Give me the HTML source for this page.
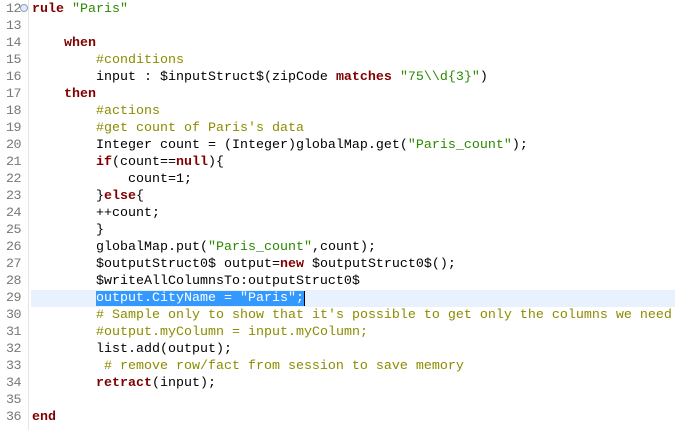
<!DOCTYPE html>
<html><head><style>
html,body{margin:0;padding:0;background:#fff;width:675px;height:430px;overflow:hidden}
.g{position:absolute;left:0;top:0;width:28px;height:430px;background:#fff;border-right:1px solid #e4e4e4}
.r{position:absolute;left:0;height:17px;line-height:17px;width:675px;font-family:"Courier New","Liberation Mono",monospace;font-size:13.33px;white-space:pre;color:#000}
.n{position:absolute;left:0;width:21px;text-align:right;color:#787878;letter-spacing:-0.5px}
.c{position:absolute;left:32px}
.k{color:#7f0000;font-weight:bold}
.s{color:#2a8a00}
.m{color:#8c8c00}
.cur{background:#e8f2fe}
.sel{background:#3399ff;color:#fff}
</style></head><body>
<div class="g"></div>
<div class="r" style="top:1px"><span class="n">12</span><span style="position:absolute;left:20px;top:3px;width:8px;height:8px;border-radius:50%;border:1px solid #8aa0c0;background:#e6ecf5;box-sizing:border-box"></span><span class="c"><span class="k">rule</span> <span class="s">"Paris"</span></span></div>
<div class="r" style="top:18px"><span class="n">13</span></div>
<div class="r" style="top:35px"><span class="n">14</span><span class="c">    <span class="k">when</span></span></div>
<div class="r" style="top:52px"><span class="n">15</span><span class="c">        <span class="m">#conditions</span></span></div>
<div class="r" style="top:69px"><span class="n">16</span><span class="c">        input : $inputStruct$(zipCode <span class="k">matches</span> <span class="s">"75\\d{3}"</span>)</span></div>
<div class="r" style="top:86px"><span class="n">17</span><span class="c">    <span class="k">then</span></span></div>
<div class="r" style="top:103px"><span class="n">18</span><span class="c">        <span class="m">#actions</span></span></div>
<div class="r" style="top:120px"><span class="n">19</span><span class="c">        <span class="m">#get count of Paris's data</span></span></div>
<div class="r" style="top:137px"><span class="n">20</span><span class="c">        Integer count = (Integer)globalMap.get(<span class="s">"Paris_count"</span>);</span></div>
<div class="r" style="top:154px"><span class="n">21</span><span class="c">        <span class="k">if</span>(count==<span class="k">null</span>){</span></div>
<div class="r" style="top:171px"><span class="n">22</span><span class="c">            count=1;</span></div>
<div class="r" style="top:188px"><span class="n">23</span><span class="c">        }<span class="k">else</span>{</span></div>
<div class="r" style="top:205px"><span class="n">24</span><span class="c">        ++count;</span></div>
<div class="r" style="top:222px"><span class="n">25</span><span class="c">        }</span></div>
<div class="r" style="top:239px"><span class="n">26</span><span class="c">        globalMap.put(<span class="s">"Paris_count"</span>,count);</span></div>
<div class="r" style="top:256px"><span class="n">27</span><span class="c">        $outputStruct0$ output=<span class="k">new</span> $outputStruct0$();</span></div>
<div class="r" style="top:273px"><span class="n">28</span><span class="c">        $writeAllColumnsTo:outputStruct0$</span></div>
<div class="r" style="top:290px"><span class="n">29</span><span style="position:absolute;left:31px;right:0;top:0;height:17px" class="cur"></span><span class="c">        <span class="sel">output.CityName = "Paris";</span><span style="border-left:1px solid #000"></span></span></div>
<div class="r" style="top:307px"><span class="n">30</span><span class="c">        <span class="m"># Sample only to show that it's possible to get only the columns we need</span></span></div>
<div class="r" style="top:324px"><span class="n">31</span><span class="c">        <span class="m">#output.myColumn = input.myColumn;</span></span></div>
<div class="r" style="top:341px"><span class="n">32</span><span class="c">        list.add(output);</span></div>
<div class="r" style="top:358px"><span class="n">33</span><span class="c">         <span class="m"># remove row/fact from session to save memory</span></span></div>
<div class="r" style="top:375px"><span class="n">34</span><span class="c">        <span class="k">retract</span>(input);</span></div>
<div class="r" style="top:392px"><span class="n">35</span></div>
<div class="r" style="top:409px"><span class="n">36</span><span class="c"><span class="k">end</span></span></div>
</body></html>
